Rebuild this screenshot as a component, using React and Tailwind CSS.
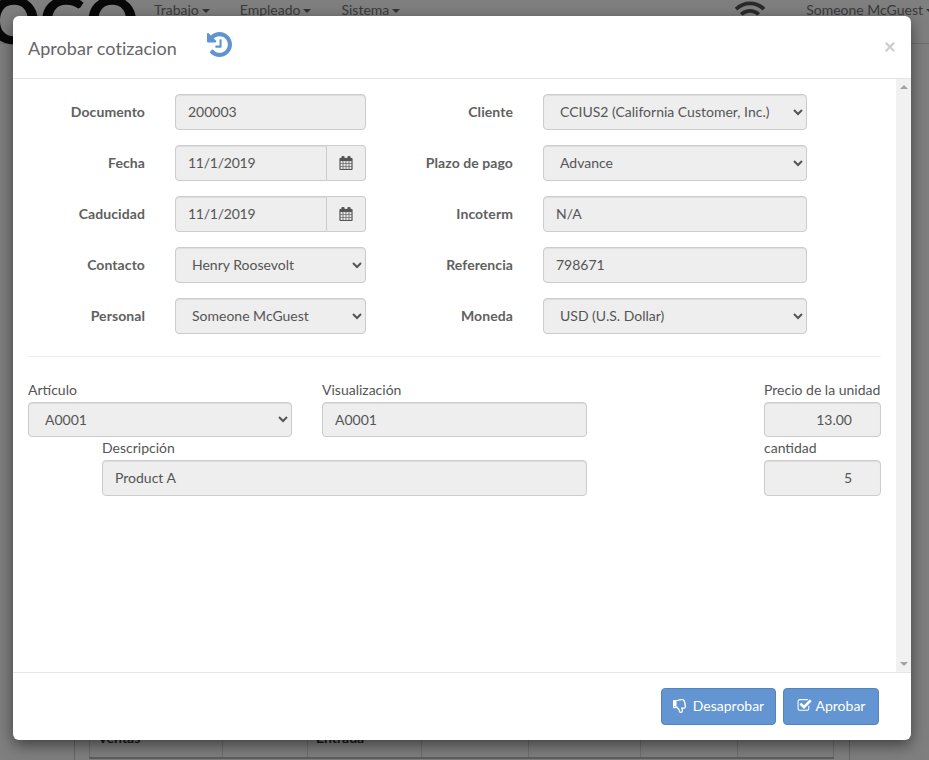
import { FaRegThumbsDown, FaWifi } from 'react-icons/fa'

const fieldClass = 'h-9 w-full rounded border border-[#ccc] bg-[#eee] px-3 pb-0.5 text-[14px] text-[#555] shadow-[inset_0_1px_1px_rgba(0,0,0,0.075)]'

const navItems = [
  { name: 'Trabajo', className: 'ml-[154px]' },
  { name: 'Empleado', className: 'ml-[30px]' },
  { name: 'Sistema', className: 'ml-[30px]' },
]

const tableCols = [
  { width: 'w-[133px]', title: 'Ventas' },
  { width: 'w-[85px]', title: '' },
  { width: 'w-[114px]', title: 'Entrada' },
  { width: 'w-[107px]', title: '' },
  { width: 'w-[112px]', title: '' },
  { width: 'w-[97px]', title: '' },
  { width: 'w-[97px]', title: '' },
]

function HistoryIcon({ className }) {
  return (
    <svg viewBox="0 128 1536 1536" fill="currentColor" className={className}>
      <path d="M1536 896q0 156-61 298t-164 245-245 164-298 61q-172 0-327-72.500T177 1387q-7-10-6.500-22.500T179 1344l137-138q10-9 25-9 16 2 23 12 73 95 179 147t225 52q104 0 198.500-40.500T1130 1258t109.500-163.500T1280 896t-40.500-198.500T1130 534 966.500 424.500 768 384q-98 0-188 35.500T420 521l137 138q31 30 14 69-17 40-59 40H64q-26 0-45-19t-19-45V256q0-42 40-59 39-17 69 14l130 129q107-101 244.500-156.500T768 128q156 0 298 61t245 164 164 245 61 298zM896 608v448q0 14-9 23t-23 9H544q-14 0-23-9t-9-23v-64q0-14 9-23t23-9h224V608q0-14 9-23t23-9h64q14 0 23 9t9 23z" />
    </svg>
  )
}

function CalendarIcon() {
  return (
    <svg viewBox="0 0 1792 1792" fill="currentColor" fillRule="evenodd" stroke="currentColor" strokeWidth="24" className="h-[14px] w-[14px]">
      <path d="M192 1664h288v-288H192v288zm352 0h320v-288H544v288zm-352-352h288V992H192v320zm352 0h320V992H544v320zM192 928h288V640H192v288zm736 736h320v-288H928v288zM544 928h320V640H544v288zm768 736h288v-288h-288v288zM928 1312h320V992H928v320zm384 0h288V992h-288v320zM928 928h320V640H928v288zm384 0h288V640h-288v288zM64 384v1280q0 52 38 90t90 38h1408q52 0 90-38t38-90V384q0-52-38-90t-90-38h-128v-96q0-66-47-113t-113-47h-64q-66 0-113 47t-47 113v96H704v-96q0-66-47-113T544 0h-64q-66 0-113 47t-47 113v96H192q-52 0-90 38t-38 90z" />
    </svg>
  )
}

function CheckSquareIcon() {
  return (
    <svg viewBox="0 0 1792 1792" fill="currentColor" className="h-[15px] w-[15px]">
      <path d="M1472 930v318q0 119-84.500 203.500T1184 1536H352q-119 0-203.500-84.500T64 1248V416q0-119 84.500-203.500T352 128h832q63 0 117 25 15 7 18 23 3 17-9 29l-49 49q-10 10-23 10-3 0-9-2-23-6-45-6H352q-66 0-113 47t-47 113v832q0 66 47 113t113 47h832q66 0 113-47t47-113V994q0-13 9-22l64-64q10-10 23-10 6 0 12 3 20 8 20 29zm231-489l-814 814q-24 24-57 24t-57-24L345 825q-24-24-24-57t24-57l110-110q24-24 57-24t57 24l263 263 647-647q24-24 57-24t57 24l110 110q24 24 24 57t-24 57z" />
    </svg>
  )
}

function Caret() {
  return <span className="ml-[3px] inline-block border-x-[4px] border-t-[4px] border-x-transparent border-t-[#666] align-middle" />
}

function Label({ children }) {
  return <div className="flex h-9 items-center justify-end pb-0.5 text-[14px] font-bold tracking-[0.08px] text-[#606060]">{children}</div>
}

function Field({ value, className = '' }) {
  return <input readOnly disabled value={value} className={`${fieldClass} ${className}`} />
}

function Choice({ value, className = '' }) {
  return (
    <select disabled value={value} onChange={() => {}} className={`${fieldClass} opacity-100 ${className}`}>
      <option>{value}</option>
    </select>
  )
}

function DateField({ value }) {
  return (
    <div className="flex h-9">
      <input readOnly disabled value={value} className="h-9 w-[152px] rounded-l border border-[#ccc] bg-[#eee] px-3 pb-0.5 text-[14px] tracking-[-0.25px] text-[#555] shadow-[inset_0_1px_1px_rgba(0,0,0,0.075)]" />
      <span className="flex h-9 flex-1 items-center justify-center rounded-r border border-l-0 border-[#ccc] bg-[#eee] text-[#555]">
        <CalendarIcon />
      </span>
    </div>
  )
}

function Stacked({ label, children, className = '' }) {
  return (
    <div className={className}>
      <div className="mb-0.5 h-5 whitespace-nowrap text-[14px] leading-5 text-[#555]">{label}</div>
      {children}
    </div>
  )
}

function Background() {
  return (
    <div className="flex h-[760px] flex-col overflow-hidden bg-white">
      <div className="relative flex h-[44px] shrink-0 items-start whitespace-nowrap border-b border-[#ddd] text-[14px] leading-5 text-[#777]">
        <div className="absolute -left-[44px] -top-[12px] text-[64px] font-black leading-[64px] text-[#111]">LOGO</div>
        {navItems.map(item => (
          <span key={item.name} className={item.className}>
            {item.name}
            <Caret />
          </span>
        ))}
        <FaWifi className="ml-auto -mt-[3px] mr-[41px] text-[30px] text-[#555]" />
        <span className="-mr-[5px]">
          Someone McGuest
          <Caret />
        </span>
      </div>
      <div className="ml-[74px] flex w-[776px] flex-1 flex-col justify-end border-x border-[#ccc] pb-px pl-[14px] pr-[15px]">
        <div className="flex h-[32px] border-b-2 border-[#bbb] text-[14px] font-bold leading-[22px] text-[#333]">
          {tableCols.map((col, i) => (
            <div key={i} className={`${col.width} border-l border-[#ddd] pl-2 last:border-r`}>{col.title}</div>
          ))}
        </div>
      </div>
    </div>
  )
}

export default function App() {
  return (
    <div className="relative h-[760px] w-[929px] overflow-hidden font-['Lato','Liberation_Sans',sans-serif]">
      <Background />
      <div className="absolute inset-0 bg-black/50" />
      <div className="absolute left-[13px] top-4 flex h-[724px] w-[898px] flex-col rounded-md bg-white shadow-[0_5px_15px_rgba(0,0,0,0.5)]">
        <div className="flex h-[63px] shrink-0 items-start border-b border-[#e5e5e5] px-[15px]">
          <h4 className="mt-5 text-[18px] leading-6 tracking-[0.05px] text-[#666]">Aprobar cotizacion</h4>
          <HistoryIcon className="ml-[30px] mt-[16px] h-[25px] w-[25px] text-[#5f94d0]" />
          <span className="ml-auto mt-[18px] text-[21px] font-bold leading-6 text-[#ccc]">×</span>
        </div>
        <div className="flex min-h-0 flex-1">
          <div className="flex-1 p-[15px]">
            <div className="grid grid-cols-[117px_191px_117px_264px] gap-x-[30px] gap-y-[15px]">
              <Label>Documento</Label>
              <Field value="200003" />
              <Label>Cliente</Label>
              <Choice value="CCIUS2 (California Customer, Inc.)" />
              <Label>Fecha</Label>
              <DateField value="11/1/2019" />
              <Label>Plazo de pago</Label>
              <Choice value="Advance" />
              <Label>Caducidad</Label>
              <DateField value="11/1/2019" />
              <Label>Incoterm</Label>
              <Field value="N/A" />
              <Label>Contacto</Label>
              <Choice value="Henry Roosevolt" />
              <Label>Referencia</Label>
              <Field value="798671" />
              <Label>Personal</Label>
              <Choice value="Someone McGuest" />
              <Label>Moneda</Label>
              <Choice value="USD (U.S. Dollar)" />
            </div>
            <hr className="mb-[23px] mt-[22px] border-[#eee]" />
            <div className="flex justify-between">
              <div className="w-[559px]">
                <div className="mb-px flex gap-[30px]">
                  <Stacked label="Artículo" className="w-[264px]">
                    <Choice value="A0001" className="!h-[35px] !pb-0" />
                  </Stacked>
                  <Stacked label="Visualización" className="flex-1">
                    <Field value="A0001" className="!h-[35px] !pb-0" />
                  </Stacked>
                </div>
                <Stacked label="Descripción" className="ml-[74px]">
                  <Field value="Product A" />
                </Stacked>
              </div>
              <div className="w-[117px]">
                <Stacked label="Precio de la unidad" className="mb-px">
                  <Field value="13.00" className="!h-[35px] !pb-0 pr-7 text-right" />
                </Stacked>
                <Stacked label="cantidad">
                  <Field value="5" className="pr-7 text-right" />
                </Stacked>
              </div>
            </div>
          </div>
          <div className="flex w-[15px] shrink-0 flex-col items-center justify-between bg-[#f1f1f1] py-[6px]">
            <span className="border-x-[4px] border-b-[4px] border-x-transparent border-b-[#a3a3a3]" />
            <span className="border-x-[4px] border-t-[4px] border-x-transparent border-t-[#a3a3a3]" />
          </div>
        </div>
        <div className="flex h-[68px] shrink-0 justify-end gap-[7px] border-t border-[#e5e5e5] pr-8 pt-[15px]">
          <button className="flex h-[37px] w-[115px] items-center justify-center gap-[6px] rounded border border-[#5484bc] bg-[#6295d2] pb-0.5 text-[14px] text-white">
            <FaRegThumbsDown /> Desaprobar
          </button>
          <button className="flex h-[37px] w-[96px] items-center justify-center gap-[4px] rounded border border-[#5484bc] bg-[#6295d2] pb-0.5 text-[14px] text-white">
            <CheckSquareIcon /> Aprobar
          </button>
        </div>
      </div>
    </div>
  )
}
